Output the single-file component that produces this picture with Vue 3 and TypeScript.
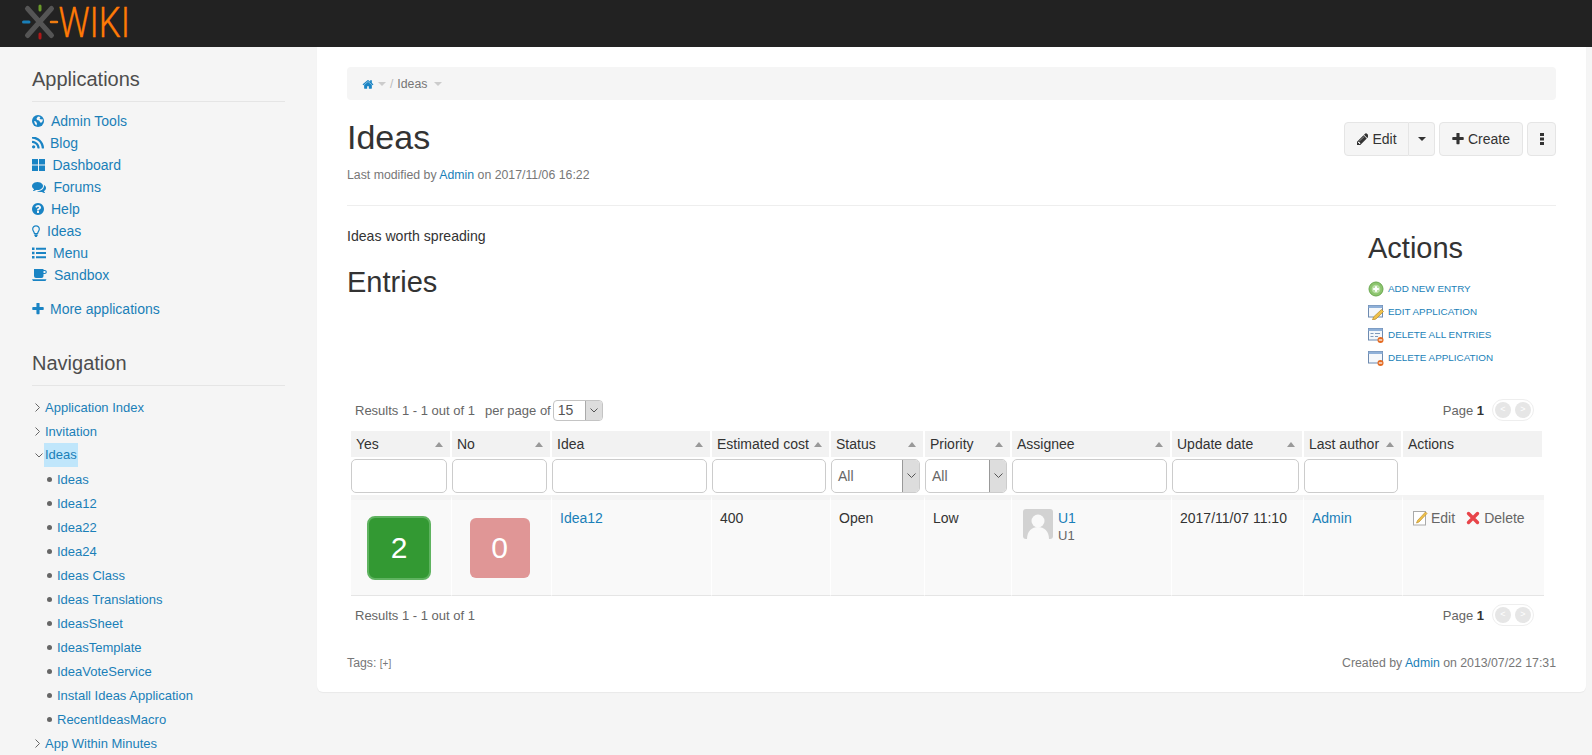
<script setup lang="ts">
interface AppItem { label: string; icon: string; w: number }
const apps: AppItem[] = [
  { label: 'Admin Tools', icon: 'globe', w: 19 },
  { label: 'Blog', icon: 'rss', w: 18 },
  { label: 'Dashboard', icon: 'dash', w: 20.5 },
  { label: 'Forums', icon: 'comments', w: 21.5 },
  { label: 'Help', icon: 'help', w: 19 },
  { label: 'Ideas', icon: 'bulb', w: 15 },
  { label: 'Menu', icon: 'list', w: 21 },
  { label: 'Sandbox', icon: 'coffee', w: 22 },
]
const nav = ['Ideas', 'Idea12', 'Idea22', 'Idea24', 'Ideas Class', 'Ideas Translations', 'IdeasSheet', 'IdeasTemplate', 'IdeaVoteService', 'Install Ideas Application', 'RecentIdeasMacro']
const cols = [
  { name: 'Yes', w: 101, sort: true, filter: 'input' },
  { name: 'No', w: 100, sort: true, filter: 'input' },
  { name: 'Idea', w: 160, sort: true, filter: 'input' },
  { name: 'Estimated cost', w: 119, sort: true, filter: 'input' },
  { name: 'Status', w: 94, sort: true, filter: 'select' },
  { name: 'Priority', w: 87, sort: true, filter: 'select' },
  { name: 'Assignee', w: 160, sort: true, filter: 'input' },
  { name: 'Update date', w: 132, sort: true, filter: 'input' },
  { name: 'Last author', w: 99, sort: true, filter: 'input' },
  { name: 'Actions', w: 141, sort: false, filter: '' },
]
const actions = [
  { label: 'ADD NEW ENTRY', icon: 'add' },
  { label: 'EDIT APPLICATION', icon: 'edit' },
  { label: 'DELETE ALL ENTRIES', icon: 'delall' },
  { label: 'DELETE APPLICATION', icon: 'delapp' },
]
</script>

<template>
  <div class="page">
    <header class="topbar">
      <svg class="logo" width="150" height="47" viewBox="0 0 150 47">
        <g stroke-linecap="round">
          <path d="M27.500 8.500 L51.500 35.500 M51.500 8.500 L27.500 35.500" stroke="#555" stroke-width="5" />
          <path d="M40 6 V10" stroke="#6a9a2a" stroke-width="3" />
          <path d="M40 34 V38" stroke="#b01818" stroke-width="3" />
          <path d="M23.500 22 H29" stroke="#1a7fb8" stroke-width="3" />
          <path d="M51 22 H57" stroke="#f07c10" stroke-width="2.500" />
        </g>
        <text class="logo-text" x="58.500" y="37" textLength="71.500" lengthAdjust="spacingAndGlyphs">WIKI</text>
      </svg>
    </header>

    <div class="layout">
      <aside class="sidebar">
        <h3 class="side-title">Applications</h3>
        <ul class="app-list">
          <li v-for="a in apps" :key="a.label" class="app-item">
            <span class="app-icon" :style="{ width: a.w + 'px' }">
              <svg v-if="a.icon === 'globe'" width="12" height="12" viewBox="0 0 12 12">
                <circle cx="6" cy="6" r="6" fill="#1a84c4" />
                <path d="M6 1.500 L8.500 2 L7.500 3.500 L9 4.500 L10.500 4 L10.800 6 L9 8 L8 7 L7 5.500 L5 5 L4.500 3.500 Z M2 6 L4 6.500 L5 8.500 L4.500 10.500 L3 9 Z" fill="#f5f5f5" />
              </svg>
              <svg v-else-if="a.icon === 'rss'" width="12" height="12" viewBox="192 192 1408 1408">
                <path fill="#1a84c4" d="M576 1344q0 80-56 136t-136 56-136-56-56-136 56-136 136-56 136 56 56 136zm512 123q2 28-17 48-18 21-47 21h-135q-25 0-43-16.500t-20-41.500q-22-229-184.500-391.500t-391.500-184.500q-25-2-41.500-20t-16.500-43v-135q0-29 21-47 17-17 43-17h5q160 13 306 80.500t259 181.500q114 113 181.500 259t80.500 306zm512 2q2 27-18 47-18 20-46 20h-143q-26 0-44.500-17.500t-19.500-42.500q-12-215-101-408.500t-231.500-336-336-231.500-408.500-102q-25-1-42.500-19.500t-17.500-43.500v-143q0-28 20-46 18-18 44-18h3q262 13 501.500 120t425.500 294q187 186 294 425.500t120 501.500z" />
              </svg>
              <svg v-else-if="a.icon === 'dash'" width="13" height="12" viewBox="0 0 13 12">
                <path fill="#1a84c4" d="M0 0h6v5.500H0zM7 0h6v5.500H7zM0 6.500h6V12H0zM7 6.500h6V12H7z" />
              </svg>
              <svg v-else-if="a.icon === 'comments'" width="14" height="12" viewBox="0 128 1792 1536">
                <path fill="#1a84c4" d="M1408 768q0 139-94 257t-256.500 186.500-353.500 68.500q-86 0-176-16-124 88-278 128-36 9-86 16h-3q-11 0-20.500-8t-11.500-21q-1-3-1-6.500t.5-6.500 2-6l2.500-5 3.500-5.500 4-5 4.500-5 4-4.500q5-6 23-25t26-29.500 22.500-29 25-38.500 20.500-44q-124-72-195-177t-71-224q0-139 94-257t256.500-186.500 353.500-68.500 353.500 68.500 256.500 186.500 94 257zm384 256q0 120-71 224.500t-195 176.500q10 24 20.500 44t25 38.500 22.500 29 26 29.500 23 25q1 1 4 4.500t4.500 5 4 5 3.500 5.500l2.500 5 2 6 .5 6.500-1 6.500q-3 14-13 22t-22 7q-50-7-86-16-154-40-278-128-90 16-176 16-271 0-472-132 58 4 88 4 161 0 309-45t264-129q125-92 192-212t67-254q0-77-23-152 129 71 204 178t75 230z" />
              </svg>
              <svg v-else-if="a.icon === 'help'" width="12" height="12" viewBox="128 128 1536 1536">
                <path fill="#1a84c4" d="M1024 1376v-192q0-14-9-23t-23-9h-192q-14 0-23 9t-9 23v192q0 14 9 23t23 9h192q14 0 23-9t9-23zm256-672q0-88-55.500-163t-138.500-116-170-41q-243 0-371 213-15 24 8 42l132 100q7 6 19 6 16 0 25-12 53-68 86-92 34-24 86-24 48 0 85.500 26t37.500 59q0 38-20 61t-68 45q-63 28-115.500 86.500t-52.500 125.500v36q0 14 9 23t23 9h192q14 0 23-9t9-23q0-19 21.500-49.500t54.500-49.500q32-18 49-28.500t46-35 44.500-48 28-60.500 12.500-81zm384 192q0 209-103 385.500t-279.500 279.500-385.500 103-385.500-103-279.500-279.500-103-385.500 103-385.500 279.500-279.500 385.500-103 385.500 103 279.500 279.500 103 385.500z" />
              </svg>
              <svg v-else-if="a.icon === 'bulb'" width="8" height="13" viewBox="0 0 8 13">
                <path fill="none" stroke="#1a84c4" stroke-width="1.200" d="M4 .8a3.300 3.300 0 0 0-3.300 3.300c0 1.800 1.500 2.600 1.700 4.400h3.200c.2-1.800 1.700-2.600 1.700-4.400A3.300 3.300 0 0 0 4 .8z" />
                <path fill="#1a84c4" d="M2.400 9.200h3.200v1.400l-.8 1.500h-1.600l-.8-1.500z" />
              </svg>
              <svg v-else-if="a.icon === 'list'" width="14" height="12" viewBox="0 0 14 12">
                <path fill="#1a84c4" d="M0 .5h2.500v2.500H0zM0 4.800h2.500v2.500H0zM0 9h2.500v2.500H0zM4 .8h10v2H4zM4 5h10v2H4zM4 9.200h10v2H4z" />
              </svg>
              <svg v-else-if="a.icon === 'coffee'" width="15" height="12" viewBox="0 0 15 12">
                <path fill="#1a84c4" d="M2 0h9.500v1h1.300c1.100 0 2 .9 2 2s-.9 2-2 2h-1.300v2a2 2 0 0 1-2 2H4a2 2 0 0 1-2-2zM11.500 2v2h1.200a1 1 0 0 0 0-2zM0 10.300h14.500L13.500 12H1z" />
              </svg>
            </span>
            <a class="link">{{ a.label }}</a>
          </li>
        </ul>
        <div class="more-apps">
          <svg class="more-icon" width="12" height="12" viewBox="160 160 1472 1472">
            <path fill="#1a84c4" d="M1600 736v192q0 40-28 68t-68 28h-416v416q0 40-28 68t-68 28h-192q-40 0-68-28t-28-68v-416h-416q-40 0-68-28t-28-68v-192q0-40 28-68t68-28h416v-416q0-40 28-68t68-28h192q40 0 68 28t28 68v416h416q40 0 68 28t28 68z" />
          </svg>
          <a class="link">More applications</a>
        </div>

        <h3 class="side-title nav-title">Navigation</h3>
        <ul class="tree">
          <li class="tree-row"><svg class="chev" width="5" height="9" viewBox="0 0 5 9"><path d="M.5.5 4.500 4.500 .5 8.500" fill="none" stroke="#666" /></svg><a class="link">Application Index</a></li>
          <li class="tree-row"><svg class="chev" width="5" height="9" viewBox="0 0 5 9"><path d="M.5.5 4.500 4.500 .5 8.500" fill="none" stroke="#666" /></svg><a class="link">Invitation</a></li>
          <li class="tree-row">
            <svg class="chev-down" width="8" height="5" viewBox="0 0 8 5"><path d="M.5.5 4 4 7.500.5" fill="none" stroke="#666" /></svg>
            <a class="link selected">Ideas</a>
          </li>
          <li v-for="n in nav" :key="n" class="tree-row tree-child"><span class="dot"></span><a class="link">{{ n }}</a></li>
          <li class="tree-row"><svg class="chev" width="5" height="9" viewBox="0 0 5 9"><path d="M.5.5 4.500 4.500 .5 8.500" fill="none" stroke="#666" /></svg><a class="link">App Within Minutes</a></li>
        </ul>
      </aside>

      <main class="card">
        <nav class="crumb">
          <svg width="12" height="10" viewBox="0 128 1792 1408">
            <path fill="#1a84c4" d="M1472 992v480q0 26-19 45t-45 19h-384v-384h-256v384h-384q-26 0-45-19t-19-45v-480q0-1 .5-3t.5-3l575-474 575 474q1 2 1 6zm223-69l-62 74q-8 9-21 11h-3q-13 0-21-7l-692-577-692 577q-12 8-24 7-13-2-21-11l-62-74q-8-10-7-23.500t11-21.500l719-599q32-26 76-26t76 26l244 204v-195q0-14 9-23t23-9h192q14 0 23 9t9 23v408l219 182q10 8 11 21.500t-7 23.500z" />
          </svg>
          <span class="crumb-caret"></span>
          <span class="crumb-sep">/</span>
          <span class="crumb-text">Ideas</span>
          <span class="crumb-caret crumb-caret-end"></span>
        </nav>

        <div class="title-row">
          <div>
            <h1 class="title">Ideas</h1>
            <p class="meta">Last modified by <a class="link">Admin</a> on 2017/11/06 16:22</p>
          </div>
          <div class="toolbar">
            <div class="btn-group">
              <button class="btn btn-edit">
                <svg width="12" height="12" viewBox="0 128 1536 1536"><path fill="#333" d="M491 1536l91-91-235-235-91 91v107h128v128h107zm523-928q0-22-22-22-10 0-17 7l-542 542q-7 7-7 17 0 22 22 22 10 0 17-7l542-542q7-7 7-17zm-54-192l416 416-832 832h-416v-416zm683 96q0 53-37 90l-166 166-416-416 166-165q36-38 90-38 53 0 91 38l235 234q37 39 37 91z" /></svg>
                Edit
              </button>
              <button class="btn btn-caret"><span class="caret"></span></button>
            </div>
            <button class="btn btn-create">
              <svg width="12" height="12" viewBox="160 160 1472 1472"><path fill="#333" d="M1600 736v192q0 40-28 68t-68 28h-416v416q0 40-28 68t-68 28h-192q-40 0-68-28t-28-68v-416h-416q-40 0-68-28t-28-68v-192q0-40 28-68t68-28h416v-416q0-40 28-68t68-28h192q40 0 68 28t28 68v416h416q40 0 68 28t28 68z" /></svg>
              Create
            </button>
            <button class="btn btn-more">
              <svg width="4" height="12" viewBox="0 0 4 12"><path fill="#333" d="M0 0h4v3H0zM0 4.500h4v3H0zM0 9h4v3H0z" /></svg>
            </button>
          </div>
        </div>

        <div class="rule"></div>

        <div class="content">
          <div class="content-main">
            <p class="lead">Ideas worth spreading</p>
            <h2 class="entries">Entries</h2>
          </div>
          <div class="actions-box">
            <h2 class="actions-title">Actions</h2>
            <ul class="actions-list">
              <li v-for="a in actions" :key="a.label" class="action-item">
                <svg class="silk" width="16" height="16" viewBox="0 0 16 16">
                  <template v-if="a.icon === 'add'">
                    <circle cx="8" cy="8" r="7" fill="#8cc46e" stroke="#6aa84f" />
                    <circle cx="8" cy="8" r="4.300" fill="#b9dea5" />
                    <path d="M5.200 8h5.600M8 5.200v5.600" stroke="#fff" stroke-width="2" />
                  </template>
                  <template v-else>
                    <rect x="0.500" y="1.500" width="14" height="11.500" fill="#f4f7fb" stroke="#6d8ab0" />
                    <rect x="0.500" y="1.500" width="14" height="2.500" fill="#8fb0d8" />
                    <path v-if="a.icon === 'delall'" d="M2.500 6.500h3M2.500 9.500h3M7 6.500h5M7 9.500h3" stroke="#7f9abb" />
                    <template v-if="a.icon === 'edit'">
                      <path d="M13.500 5.500 L15.500 7.500 L8 15 L4.500 16 L5.500 13 Z" fill="#efc14a" stroke="#b58a2c" stroke-width=".7" />
                    </template>
                    <template v-else>
                      <circle cx="12.500" cy="13" r="3" fill="#e46a21" />
                      <path d="M10.800 13h3.400" stroke="#fff" stroke-width="1.200" />
                    </template>
                  </template>
                </svg>
                <a class="link">{{ a.label }}</a>
              </li>
            </ul>
          </div>
        </div>

        <div class="livetable">
          <div class="pager-row pager-top">
            <span>Results 1 - 1 out of 1</span>
            <span class="per-page">per page of</span>
            <span class="page-select"><span class="ps-val">15</span><span class="ps-arrow"><svg width="8" height="5" viewBox="0 0 8 5"><path d="M.5.5 4 4 7.500.5" fill="none" stroke="#555" /></svg></span></span>
            <span class="spacer"></span>
            <span>Page <b>1</b></span>
            <span class="pager-nav"><span class="pn">&lt;</span><span class="pn">&gt;</span></span>
          </div>

          <table class="grid">
            <colgroup><col v-for="c in cols" :key="c.name" :style="{ width: c.w + 'px' }" /></colgroup>
            <thead>
              <tr class="head">
                <th v-for="c in cols" :key="c.name"><span>{{ c.name }}</span><i v-if="c.sort" class="sort"></i></th>
              </tr>
              <tr class="filters">
                <td v-for="c in cols" :key="c.name">
                  <input v-if="c.filter === 'input'" class="filter-input" type="text" />
                  <div v-else-if="c.filter === 'select'" class="filter-select">
                    <span class="fs-val">All</span>
                    <span class="fs-arrow"><svg width="9" height="6" viewBox="0 0 9 6"><path d="M.5.5 4.500 4.500 8.500.5" fill="none" stroke="#555" /></svg></span>
                  </div>
                </td>
              </tr>
            </thead>
            <tbody>
              <tr class="row">
                <td class="center"><div class="vote vote-yes">2</div></td>
                <td class="center"><div class="vote vote-no">0</div></td>
                <td><a class="link">Idea12</a></td>
                <td>400</td>
                <td>Open</td>
                <td>Low</td>
                <td class="assignee-cell">
                  <div class="assignee">
                    <svg class="avatar" width="30" height="30" viewBox="0 0 30 30">
                      <rect width="30" height="30" rx="3" fill="#d2d2d2" />
                      <circle cx="15" cy="12" r="6.500" fill="#f9f9f9" />
                      <path d="M4 30c0-8 5-12 11-12s11 4 11 12z" fill="#f9f9f9" />
                    </svg>
                    <div class="who"><a class="link">U1</a><span class="who-sub">U1</span></div>
                  </div>
                </td>
                <td>2017/11/07 11:10</td>
                <td><a class="link">Admin</a></td>
                <td>
                  <div class="row-actions">
                    <span class="ra">
                      <svg width="16" height="16" viewBox="0 0 16 16">
                        <rect x="1.500" y="1.500" width="12" height="13.500" fill="#fff" stroke="#aaa" />
                        <path d="M13.500 2 L15 3.500 L7 12 L4.500 13 L5.500 10.500 Z" fill="#efc14a" stroke="#c0912c" stroke-width=".7" />
                      </svg>
                      Edit
                    </span>
                    <span class="ra ra-del">
                      <svg width="14" height="14" viewBox="0 0 14 14">
                        <path d="M2.500 2.500 L11.500 11.500 M11.500 2.500 L2.500 11.500" stroke="#e8454a" stroke-width="3.400" stroke-linecap="round" />
                      </svg>
                      Delete
                    </span>
                  </div>
                </td>
              </tr>
            </tbody>
          </table>

          <div class="pager-row pager-bottom">
            <span>Results 1 - 1 out of 1</span>
            <span class="spacer"></span>
            <span>Page <b>1</b></span>
            <span class="pager-nav"><span class="pn">&lt;</span><span class="pn">&gt;</span></span>
          </div>
        </div>

        <div class="foot">
          <span>Tags: <a class="tag-add">[+]</a></span>
          <span>Created by <a class="link">Admin</a> on 2013/07/22 17:31</span>
        </div>
      </main>
    </div>
  </div>
</template>

<style scoped>
.page { height: 755px; overflow: hidden; background: #f5f5f5; font-family: "Liberation Sans", Arial, sans-serif; font-size: 14px; color: #333; }
.topbar { height: 47px; background: #222; }
.logo { display: block; }
.logo-text { font-family: Roboto, "Liberation Sans", sans-serif; font-weight: 300; font-size: 43px; fill: #ff7a05; stroke: #ff7a05; stroke-width: .4px; }
.layout { display: flex; align-items: flex-start; }
.sidebar { width: 317px; flex: none; padding: 0 32px; box-sizing: border-box; }
.side-title { margin: 0; padding: 20px 0 10px; font-size: 20px; font-weight: 400; line-height: 24px; color: #4d4d4d; border-bottom: 1px solid #e5e5e5; width: 253px; }
.nav-title { padding-top: 31px; padding-bottom: 10px; }
ul { list-style: none; margin: 0; padding: 0; }
.link { color: #1a7fb8; text-decoration: none; }
.app-list { margin-top: 8px; }
.app-item { display: flex; align-items: center; height: 22px; }
.app-icon { display: flex; align-items: center; flex: none; }
.more-apps { display: flex; align-items: center; height: 22px; margin-top: 12px; }
.more-icon { margin-right: 6px; }
.tree { margin-top: 9px; font-size: 13px; }
.tree-row { display: flex; align-items: center; height: 24px; padding-left: 3px; position: relative; }
.chev { margin-right: 5px; flex: none; }
.chev-down { margin-right: 2px; margin-top: 1px; }
.selected { background: #c0e6fb; padding: 0 1px; height: 24px; line-height: 24px; margin-left: -1px; }
.tree-child { padding-left: 15px; }
.dot { width: 5px; height: 5px; border-radius: 50%; background: #666; margin-right: 5px; }
.card { width: 1269px; height: 645px; flex: none; box-sizing: border-box; padding: 20px 30px 0; background: #fff; border-radius: 0 0 6px 6px; box-shadow: 0 1px 1px rgba(0,0,0,.05); }
.crumb { display: flex; align-items: center; height: 33px; padding-left: 15px; background: #f5f5f5; border-radius: 4px; font-size: 12px; color: #777; }
.crumb-caret { width: 0; height: 0; margin: 1px 0 0 4px; border-left: 4px solid transparent; border-right: 4px solid transparent; border-top: 4px solid #ccc; }
.crumb-caret-end { margin-left: 7px; }
.crumb-sep { margin: 0 4px; color: #bbb; }
.crumb-text { font-size: 12.300px; }
.title-row { display: flex; justify-content: space-between; align-items: flex-start; height: 105px; }
.title { margin: 0; padding-top: 17px; font-size: 34px; font-weight: 400; line-height: 40px; color: #333; }
.meta { margin: 10px 0 0; font-size: 12.300px; line-height: 16px; color: #777; }
.toolbar { display: flex; gap: 4px; margin-top: 22px; }
.btn-group { display: flex; }
.btn { height: 34px; box-sizing: border-box; background: #f5f5f5; border: 1px solid #e5e5e5; border-radius: 4px; font: 14px "Liberation Sans", Arial, sans-serif; color: #333; display: flex; align-items: center; justify-content: center; gap: 4px; padding: 0; }
.btn-edit { width: 65px; border-radius: 4px 0 0 4px; }
.btn-caret { width: 26px; border-left: 0; border-radius: 0 4px 4px 0; }
.caret { width: 0; height: 0; border-left: 4px solid transparent; border-right: 4px solid transparent; border-top: 4px solid #333; }
.btn-create { width: 84px; }
.btn-more { width: 29px; }
.rule { height: 1px; background: #eee; }
.content { display: flex; justify-content: space-between; height: 183px; }
.lead { margin: 0; padding-top: 21px; line-height: 18px; font-size: 14.100px; }
.entries { margin: 0; padding-top: 19px; font-size: 29px; font-weight: 400; line-height: 36px; color: #333; }
.actions-box { width: 188px; padding-top: 25px; }
.actions-title { margin: 0; font-size: 29px; font-weight: 400; line-height: 34px; color: #333; }
.actions-list { margin-top: 12px; }
.action-item { display: flex; align-items: center; height: 23px; font-size: 9.900px; gap: 4px; }
.livetable { margin-left: 4px; width: 1193px; font-size: 13px; }
.pager-row { display: flex; align-items: center; color: #666; }
.pager-top { height: 22px; margin-top: 10px; margin-bottom: 10px; }
.pager-bottom { height: 22px; margin-top: 8px; }
.pager-row > span:first-child { margin-left: 4px; }
.per-page { margin: 0 2px 0 10px; }
.page-select { display: flex; width: 50px; height: 21px; box-sizing: border-box; border: 1px solid #c4c4c4; border-radius: 4px; overflow: hidden; background: #fff; color: #555; font-size: 14px; align-items: stretch; }
.ps-val { flex: 1; padding-left: 4px; line-height: 19px; }
.ps-arrow { width: 16px; background: #ddd; border-left: 1px solid #aaa; display: flex; align-items: center; justify-content: center; }
.spacer { flex: 1; }
.pager-nav { display: flex; width: 42px; height: 22px; margin: 0 10px 0 8px; padding: 0 2px; box-sizing: border-box; border: 1px solid #eee; border-radius: 11px; align-items: center; justify-content: space-between; }
.pn { width: 16px; height: 16px; border-radius: 50%; background: #e6e6e6; color: #fff; font-size: 9px; line-height: 15px; text-align: center; }
b { color: #333; }
.grid { table-layout: fixed; width: 1193px; border-collapse: separate; border-spacing: 0; font-size: 14px; color: #333; }
.head th { position: relative; height: 26px; padding: 0 0 0 5px; box-sizing: border-box; background: #f2f2f2; border-right: 2px solid #fff; font-weight: 400; text-align: left; color: #333; }
.sort { position: absolute; right: 7px; top: 11px; width: 0; height: 0; border-left: 4px solid transparent; border-right: 4px solid transparent; border-bottom: 5px solid #999; }
.filters td { padding: 2px 5px 2px 0; height: 34px; }
.filter-input { display: block; width: 100%; height: 34px; box-sizing: border-box; border: 1px solid #ccc; border-radius: 5px; background: #fff; padding: 0; }
.filter-select { display: flex; height: 34px; box-sizing: border-box; border: 1px solid #ccc; border-radius: 5px; overflow: hidden; background: #fff; color: #666; }
.fs-val { flex: 1; padding-left: 6px; line-height: 33px; }
.fs-arrow { width: 16px; background: #ddd; border-left: 1px solid #999; display: flex; align-items: center; justify-content: center; }
.row td { height: 101px; box-sizing: border-box; vertical-align: top; padding: 8px 8px 0; background: #f9f9f9; border-top: 5px solid #f3f3f3; border-bottom: 1px solid #e5e5e5; border-right: 1px solid #fff; line-height: 20px; }
.row td:last-child { border-right: 0; }
.row td.center { padding: 0 4px 0 0; vertical-align: middle; }
.vote { margin: 0 auto; display: flex; align-items: center; justify-content: center; color: #fff; font-size: 30px; box-sizing: border-box; }
.vote-yes { width: 64px; height: 64px; background: #339933; border: 2px solid #5fb360; border-radius: 8px; }
.vote-no { width: 60px; height: 60px; background: #e09696; border-radius: 6px; }
.row td.assignee-cell { padding: 9px 0 0 11px; }
.assignee { display: flex; gap: 5px; }
.avatar { flex: none; }
.who { display: flex; flex-direction: column; line-height: 17px; padding-top: 1px; }
.who-sub { font-size: 13px; color: #666; }
.row-actions { display: flex; gap: 11px; padding-left: 1px; color: #666; }
.ra { display: inline-flex; align-items: center; gap: 3px; }
.ra-del { gap: 4px; }
.foot { display: flex; justify-content: space-between; align-items: center; margin-top: 27px; height: 20px; font-size: 12.300px; color: #777; }
.tag-add { font-size: 10px; color: #777; }
</style>

<style>
html, body { margin: 0; overflow: hidden; background: #f5f5f5; }
</style>
